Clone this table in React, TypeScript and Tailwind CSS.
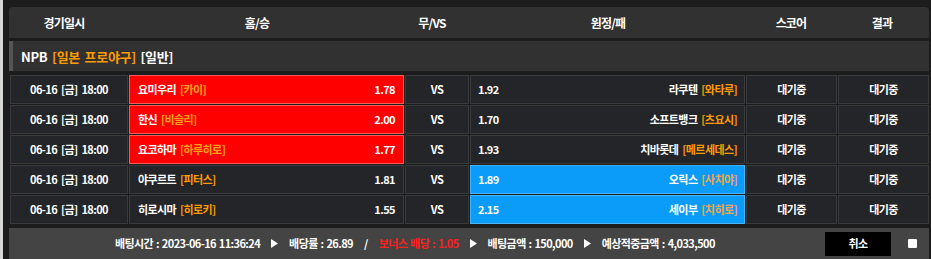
import React from 'react'

interface Game {
  date: string
  home: string
  homeP: string
  homeOdds: string
  away: string
  awayP: string
  awayOdds: string
  pick: 'home' | 'away'
}

const games: Game[] = [
  { date: '06-16 [금] 18:00', home: '요미우리', homeP: '[카이]', homeOdds: '1.78', away: '라쿠텐', awayP: '[와타루]', awayOdds: '1.92', pick: 'home' },
  { date: '06-16 [금] 18:00', home: '한신', homeP: '[비슬리]', homeOdds: '2.00', away: '소프트뱅크', awayP: '[츠요시]', awayOdds: '1.70', pick: 'home' },
  { date: '06-16 [금] 18:00', home: '요코하마', homeP: '[하루히로]', homeOdds: '1.77', away: '치바롯데', awayP: '[메르세데스]', awayOdds: '1.93', pick: 'home' },
  { date: '06-16 [금] 18:00', home: '야쿠르트', homeP: '[피터스]', homeOdds: '1.81', away: '오릭스', awayP: '[사치야]', awayOdds: '1.89', pick: 'away' },
  { date: '06-16 [금] 18:00', home: '히로시마', homeP: '[히로키]', homeOdds: '1.55', away: '세이부', awayP: '[치히로]', awayOdds: '2.15', pick: 'away' },
]

const font = { fontFamily: '"Noto Sans CJK KR", "Noto Sans", sans-serif' }

function Arrow() {
  return (
    <svg width="7" height="9" viewBox="0 0 7 9" className="shrink-0">
      <polygon points="0,0 7,4.5 0,9" fill="#ffffff" />
    </svg>
  )
}

export default function App() {
  const cell = 'h-[29px] border border-[#393a3c] bg-[#242528] flex items-center'
  const red = 'h-[29px] border border-[#ff5a5a] bg-[#ff0000] flex items-center justify-between px-[8px]'
  const blue = 'h-[29px] border border-[#45b6ff] bg-[#0a9cf8] flex items-center justify-between px-[7px]'

  return (
    <div className="w-[931px] h-[259px] bg-[#1c1c1c] flex overflow-hidden text-white font-bold" style={font}>
      <div className="w-[3px] bg-[#d6d6d6]" />
      <div className="ml-[6px] w-[920px] pt-[7px] flex flex-col">
        {/* header */}
        <div className="h-[31px] bg-[#313131] rounded-t-[4px] flex items-center text-[12px] tracking-[-0.8px] leading-none">
          <div className="w-[110px] text-center">경기일시</div>
          <div className="w-[276px] text-center">홈/승</div>
          <div className="w-[74px] text-center">무/VS</div>
          <div className="w-[278px] text-center">원정/패</div>
          <div className="w-[88px] text-center">스코어</div>
          <div className="flex-1 text-center">결과</div>
        </div>

        {/* league */}
        <div className="mt-[3px] h-[30px] bg-[#313131] border-l-[4px] border-[#555555] flex items-center pl-[8px] text-[13px] tracking-[-0.3px] [word-spacing:2px] leading-none">
          <span>NPB&nbsp;</span>
          <span className="text-[#ff9c00]">[일본 프로야구]</span>
          <span>&nbsp;[일반]</span>
        </div>

        {/* rows */}
        <div className="mt-[4px] pl-px flex flex-col gap-px text-[11px] tracking-[-0.6px] [word-spacing:2px] leading-none">
          {games.map((g, i) => (
            <div key={i} className="flex gap-px">
              <div className={`${cell} w-[118px] justify-center`}>{g.date}</div>
              {g.pick === 'home' ? (
                <div className={`${red} w-[275px]`}>
                  <span>
                    {g.home} <span className="text-[#ffa31a]">{g.homeP}</span>
                  </span>
                  <span>{g.homeOdds}</span>
                </div>
              ) : (
                <div className={`${cell} w-[275px] justify-between px-[8px]`}>
                  <span>
                    {g.home} <span className="text-[#ff9c00]">{g.homeP}</span>
                  </span>
                  <span>{g.homeOdds}</span>
                </div>
              )}
              <div className={`${cell} w-[64px] justify-center`}>VS</div>
              {g.pick === 'away' ? (
                <div className={`${blue} w-[275px]`}>
                  <span>{g.awayOdds}</span>
                  <span>
                    {g.away} <span className="text-[#f5a54a]">{g.awayP}</span>
                  </span>
                </div>
              ) : (
                <div className={`${cell} w-[275px] justify-between px-[7px]`}>
                  <span>{g.awayOdds}</span>
                  <span>
                    {g.away} <span className="text-[#ff9c00]">{g.awayP}</span>
                  </span>
                </div>
              )}
              <div className={`${cell} w-[91px] justify-center`}>대기중</div>
              <div className={`${cell} w-[91px] justify-center`}>대기중</div>
            </div>
          ))}
        </div>

        {/* footer */}
        <div className="mt-[4px] h-[31px] bg-[#444444] flex items-center pl-[106px] text-[11px] tracking-[-0.6px] [word-spacing:1px] leading-none">
          <div className="flex items-center gap-[11px]">
            <span>배팅시간 : 2023-06-16 11:36:24</span>
            <Arrow />
            <span>배당률 : 26.89</span>
            <span>/</span>
            <span className="text-[#ff1f1f]">보너스 배당 : 1.05</span>
            <Arrow />
            <span>배팅금액 : 150,000</span>
            <Arrow />
            <span>예상적중금액 : 4,033,500</span>
          </div>
          <button className="ml-auto w-[66px] h-[24px] bg-black text-white text-[11px] font-bold">취소</button>
          <div className="ml-[17px] mr-[12px] w-[9px] h-[9px] bg-white rounded-[1px]" />
        </div>
      </div>
    </div>
  )
}
